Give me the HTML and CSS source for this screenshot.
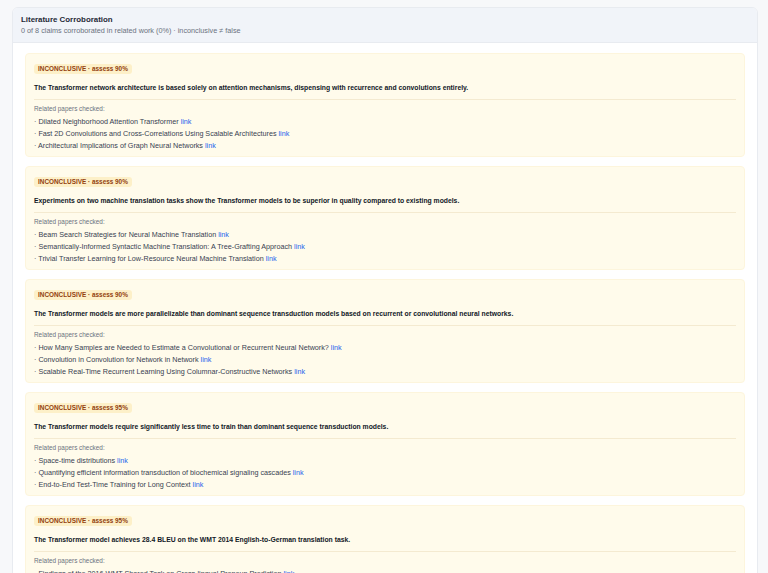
FILE: index.html
```html
<!DOCTYPE html>
<html>
<head>
    <meta charset="UTF-8">
    <title>Literature Corroboration</title>
    <link rel="stylesheet" href="styles.css">
</head>
<body>
    <div class="panel">
        <div class="panel-head">
            <h2>Literature Corroboration</h2>
            <p class="summary">0 of 8 claims corroborated in related work (0%) · inconclusive ≠ false</p>
        </div>
        <div class="panel-body">

            <div class="claim">
                <span class="badge">INCONCLUSIVE · assess 90%</span>
                <p class="claim-text">The Transformer network architecture is based solely on attention mechanisms, dispensing with recurrence and convolutions entirely.</p>
                <div class="related">
                    <div class="related-label">Related papers checked:</div>
                    <ul>
                        <li>· Dilated Neighborhood Attention Transformer <a href="#">link</a></li>
                        <li>· Fast 2D Convolutions and Cross-Correlations Using Scalable Architectures <a href="#">link</a></li>
                        <li>· Architectural Implications of Graph Neural Networks <a href="#">link</a></li>
                    </ul>
                </div>
            </div>

            <div class="claim">
                <span class="badge">INCONCLUSIVE · assess 90%</span>
                <p class="claim-text">Experiments on two machine translation tasks show the Transformer models to be superior in quality compared to existing models.</p>
                <div class="related">
                    <div class="related-label">Related papers checked:</div>
                    <ul>
                        <li>· Beam Search Strategies for Neural Machine Translation <a href="#">link</a></li>
                        <li>· Semantically-Informed Syntactic Machine Translation: A Tree-Grafting Approach <a href="#">link</a></li>
                        <li>· Trivial Transfer Learning for Low-Resource Neural Machine Translation <a href="#">link</a></li>
                    </ul>
                </div>
            </div>

            <div class="claim">
                <span class="badge">INCONCLUSIVE · assess 90%</span>
                <p class="claim-text">The Transformer models are more parallelizable than dominant sequence transduction models based on recurrent or convolutional neural networks.</p>
                <div class="related">
                    <div class="related-label">Related papers checked:</div>
                    <ul>
                        <li>· How Many Samples are Needed to Estimate a Convolutional or Recurrent Neural Network? <a href="#">link</a></li>
                        <li>· Convolution in Convolution for Network in Network <a href="#">link</a></li>
                        <li>· Scalable Real-Time Recurrent Learning Using Columnar-Constructive Networks <a href="#">link</a></li>
                    </ul>
                </div>
            </div>

            <div class="claim">
                <span class="badge">INCONCLUSIVE · assess 95%</span>
                <p class="claim-text">The Transformer models require significantly less time to train than dominant sequence transduction models.</p>
                <div class="related">
                    <div class="related-label">Related papers checked:</div>
                    <ul>
                        <li>· Space-time distributions <a href="#">link</a></li>
                        <li>· Quantifying efficient information transduction of biochemical signaling cascades <a href="#">link</a></li>
                        <li>· End-to-End Test-Time Training for Long Context <a href="#">link</a></li>
                    </ul>
                </div>
            </div>

            <div class="claim">
                <span class="badge">INCONCLUSIVE · assess 95%</span>
                <p class="claim-text">The Transformer model achieves 28.4 BLEU on the WMT 2014 English-to-German translation task.</p>
                <div class="related">
                    <div class="related-label">Related papers checked:</div>
                    <ul>
                        <li>· Findings of the 2016 WMT Shared Task on Cross-lingual Pronoun Prediction <a href="#">link</a></li>
                    </ul>
                </div>
            </div>

        </div>
    </div>
</body>
</html>
```

FILE: styles.css
```css
body {
    margin: 0;
    padding: 7px 10px 0 12px;
    background-color: #f7f8fa;
    font-family: "Liberation Sans", Arial, sans-serif;
    color: #1f2937;
}
.panel {
    background-color: #fff;
    border: 1px solid #e8ebf0;
    border-radius: 6px;
    overflow: hidden;
}
.panel-head {
    background-color: #f1f4f9;
    padding: 6px 8px 6px 8px;
    border-bottom: 1px solid #e8ebf0;
}
h2 {
    margin: 0;
    font-size: 7.9px;
    line-height: 11px;
    font-weight: 700;
    color: #1f2937;
}
.summary {
    margin: 1px 0 0;
    font-size: 7.25px;
    line-height: 10px;
    color: #6b7280;
}
.panel-body {
    padding: 10px 12px;
    display: flex;
    flex-direction: column;
    gap: 9px;
}
.claim {
    display: flex;
    flex-direction: column;
    align-items: flex-start;
    background-color: #fffbeb;
    border: 1px solid #fdf5dc;
    border-radius: 4px;
    padding: 10px 8px 4px 8px;
}
.badge {
    display: block;
    background-color: #fdf0c8;
    color: #92400e;
    font-size: 6.4px;
    line-height: 10px;
    font-weight: 700;
    padding: 0 4px;
    border-radius: 3px;
}
.claim-text {
    align-self: stretch;
    margin: 9px 0 0;
    font-size: 6.8px;
    line-height: 10px;
    font-weight: 700;
    color: #111827;
    padding-bottom: 6px;
    border-bottom: 1px solid #f4ead0;
}
.related {
    align-self: stretch;
    padding-top: 4px;
}
.related-label {
    font-size: 6.4px;
    line-height: 10px;
    color: #6b7280;
    margin-bottom: 2px;
}
ul {
    list-style: none;
    margin: 0;
    padding: 0;
}
li {
    font-size: 7.2px;
    line-height: 12px;
    color: #374151;
}
a {
    color: #2563eb;
    text-decoration: none;
}
```
